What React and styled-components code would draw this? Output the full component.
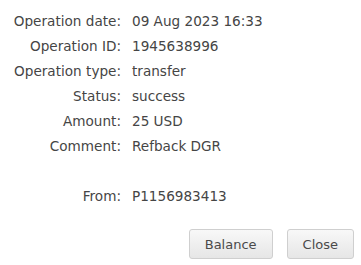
import React from "react";
import styled, { createGlobalStyle } from "styled-components";

const GlobalStyle = createGlobalStyle`
    html, body {
        margin: 0;
        padding: 0;
        background: #ffffff;
    }
`;

const Panel = styled.div`
    width: 361px;
    height: 265px;
    box-sizing: border-box;
    padding-top: 9px;
    display: flex;
    flex-direction: column;
    font-family: "DejaVu Sans", Verdana, sans-serif;
    font-size: 13.6px;
    color: #454545;
`;

const Details = styled.div`
    display: grid;
    grid-template-columns: 121px 1fr;
    column-gap: 11px;
    grid-auto-rows: 25px;
    align-items: center;
    line-height: 25px;
`;

const Label = styled.div`
    text-align: right;
    white-space: nowrap;
`;

const Value = styled.div`
    white-space: nowrap;
`;

const Spacer = styled.div`
    grid-column: 1 / span 2;
`;

const Actions = styled.div`
    display: flex;
    justify-content: flex-end;
    gap: 14px;
    padding: 20px 7px 0 0;
`;

const Button = styled.button`
    height: 30px;
    padding: 0 15px;
    border: 1px solid #cfcfcf;
    border-radius: 3px;
    background: linear-gradient(to bottom, #f8f8f8 0%, #efefef 50%, #e6e6e6 100%);
    font-family: "DejaVu Sans", Verdana, sans-serif;
    font-size: 13px;
    color: #4a4a4a;
    cursor: pointer;
`;

const rows = [
    ["Operation date:", "09 Aug 2023 16:33"],
    ["Operation ID:", "1945638996"],
    ["Operation type:", "transfer"],
    ["Status:", "success"],
    ["Amount:", "25 USD"],
    ["Comment:", "Refback DGR"],
];

const App = () => {
    return (
        <>
            <GlobalStyle />
            <Panel>
                <Details>
                    {rows.map(([label, value]) => (
                        <React.Fragment key={label}>
                            <Label>{label}</Label>
                            <Value>{value}</Value>
                        </React.Fragment>
                    ))}
                    <Spacer />
                    <Label>From:</Label>
                    <Value>P1156983413</Value>
                </Details>
                <Actions>
                    <Button>Balance</Button>
                    <Button>Close</Button>
                </Actions>
            </Panel>
        </>
    );
};

export default App;
